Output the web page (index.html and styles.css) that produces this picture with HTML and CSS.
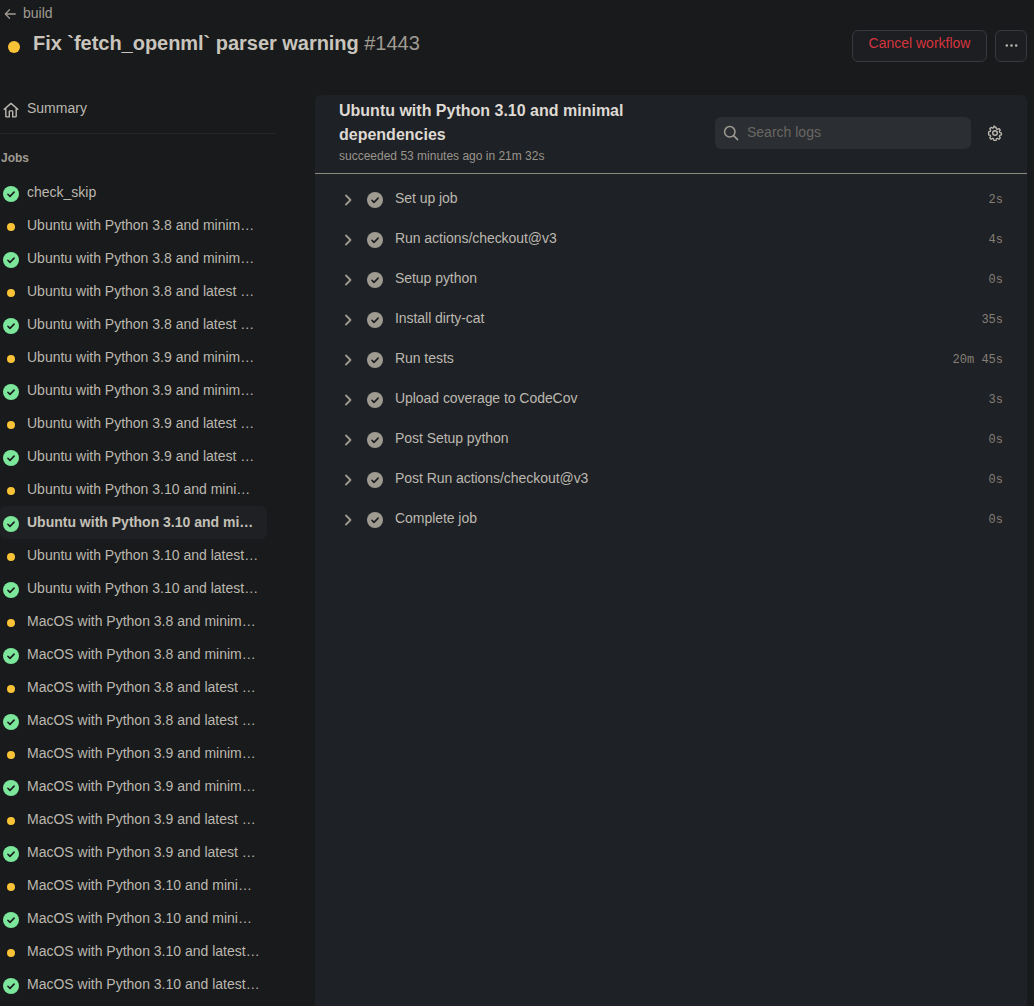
FILE: index.html
```html
<!DOCTYPE html>
<html lang="en">
<head>
<meta charset="utf-8">
<title>Fix `fetch_openml` parser warning #1443</title>
<link rel="stylesheet" href="styles.css">
<svg class="defs" width="0" height="0" aria-hidden="true">
  <symbol id="ok" viewBox="0 0 16 16"><circle cx="8" cy="8" r="8" fill="currentColor"/><path d="M4.900 8.300l2.100 2.100 4.100-4.300" fill="none" stroke="#1a1c1e" stroke-width="1.600" stroke-linecap="round" stroke-linejoin="round"/></symbol>
  <symbol id="dot" viewBox="0 0 16 16"><circle cx="8" cy="8" r="4" fill="#fac337"/></symbol>
  <symbol id="chev" viewBox="0 0 16 16"><path d="M6 3.500L10.500 8 6 12.500" fill="none" stroke="currentColor" stroke-width="1.800" stroke-linecap="round" stroke-linejoin="round"/></symbol>
</svg>
</head>
<body>
<header class="top">
  <div class="crumb">
    <svg class="i16" viewBox="0 0 16 16"><path d="M7.500 3L2.700 8l4.800 5M3 8h11" fill="none" stroke="currentColor" stroke-width="1.500" stroke-linecap="round" stroke-linejoin="round"/></svg>
    <span>build</span>
  </div>
  <div class="title-row">
    <svg class="title-dot" viewBox="0 0 12 12"><circle cx="6" cy="6" r="6" fill="#fac337"/></svg>
    <h1><b>Fix `fetch_openml` parser warning</b> <span class="num">#1443</span></h1>
    <button class="cancel">Cancel workflow</button>
    <button class="more"><svg class="i16" viewBox="0 0 16 16"><circle cx="3" cy="8" r="1.300"/><circle cx="8" cy="8" r="1.300"/><circle cx="13" cy="8" r="1.300"/></svg></button>
  </div>
</header>
<div class="main">
  <aside class="side">
    <div class="summary">
      <svg class="i16" viewBox="0 0 16 16"><path d="M1.200 7.200L8 1.400l6.800 5.800M2.800 6v8.200c0 .4.300.7.700.7h2.800V9.600c0-.4.300-.7.700-.7h2c.4 0 .7.300.7.700v5.300h2.800c.4 0 .7-.3.700-.7V6" fill="none" stroke="currentColor" stroke-width="1.400" stroke-linecap="round" stroke-linejoin="round"/></svg>
      <span>Summary</span>
    </div>
    <h2 class="jobs-h">Jobs</h2>
    <ul class="jobs">
      <li class="job"><svg class="st ok"><use href="#ok"/></svg><span>check_skip</span></li>
      <li class="job"><svg class="st"><use href="#dot"/></svg><span>Ubuntu with Python 3.8 and minimal dependencies</span></li>
      <li class="job"><svg class="st ok"><use href="#ok"/></svg><span>Ubuntu with Python 3.8 and minimal dependencies</span></li>
      <li class="job"><svg class="st"><use href="#dot"/></svg><span>Ubuntu with Python 3.8 and latest dependencies</span></li>
      <li class="job"><svg class="st ok"><use href="#ok"/></svg><span>Ubuntu with Python 3.8 and latest dependencies</span></li>
      <li class="job"><svg class="st"><use href="#dot"/></svg><span>Ubuntu with Python 3.9 and minimal dependencies</span></li>
      <li class="job"><svg class="st ok"><use href="#ok"/></svg><span>Ubuntu with Python 3.9 and minimal dependencies</span></li>
      <li class="job"><svg class="st"><use href="#dot"/></svg><span>Ubuntu with Python 3.9 and latest dependencies</span></li>
      <li class="job"><svg class="st ok"><use href="#ok"/></svg><span>Ubuntu with Python 3.9 and latest dependencies</span></li>
      <li class="job"><svg class="st"><use href="#dot"/></svg><span>Ubuntu with Python 3.10 and minimal dependencies</span></li>
      <li class="job active"><svg class="st ok"><use href="#ok"/></svg><span>Ubuntu with Python 3.10 and minimal dependencies</span></li>
      <li class="job"><svg class="st"><use href="#dot"/></svg><span>Ubuntu with Python 3.10 and latest dependencies</span></li>
      <li class="job"><svg class="st ok"><use href="#ok"/></svg><span>Ubuntu with Python 3.10 and latest dependencies</span></li>
      <li class="job"><svg class="st"><use href="#dot"/></svg><span>MacOS with Python 3.8 and minimal dependencies</span></li>
      <li class="job"><svg class="st ok"><use href="#ok"/></svg><span>MacOS with Python 3.8 and minimal dependencies</span></li>
      <li class="job"><svg class="st"><use href="#dot"/></svg><span>MacOS with Python 3.8 and latest dependencies</span></li>
      <li class="job"><svg class="st ok"><use href="#ok"/></svg><span>MacOS with Python 3.8 and latest dependencies</span></li>
      <li class="job"><svg class="st"><use href="#dot"/></svg><span>MacOS with Python 3.9 and minimal dependencies</span></li>
      <li class="job"><svg class="st ok"><use href="#ok"/></svg><span>MacOS with Python 3.9 and minimal dependencies</span></li>
      <li class="job"><svg class="st"><use href="#dot"/></svg><span>MacOS with Python 3.9 and latest dependencies</span></li>
      <li class="job"><svg class="st ok"><use href="#ok"/></svg><span>MacOS with Python 3.9 and latest dependencies</span></li>
      <li class="job"><svg class="st"><use href="#dot"/></svg><span>MacOS with Python 3.10 and minimal dependencies</span></li>
      <li class="job"><svg class="st ok"><use href="#ok"/></svg><span>MacOS with Python 3.10 and minimal dependencies</span></li>
      <li class="job"><svg class="st"><use href="#dot"/></svg><span>MacOS with Python 3.10 and latest dependencies</span></li>
      <li class="job"><svg class="st ok"><use href="#ok"/></svg><span>MacOS with Python 3.10 and latest dependencies</span></li>
    </ul>
  </aside>
  <section class="panel">
    <div class="panel-head">
      <div class="panel-title">
        <h2>Ubuntu with Python 3.10 and minimal dependencies</h2>
        <p>succeeded 53 minutes ago in 21m 32s</p>
      </div>
      <div class="search">
        <svg class="i16" viewBox="0 0 16 16"><circle cx="6.800" cy="6.800" r="5.200" fill="none" stroke="currentColor" stroke-width="1.500"/><path d="M10.600 10.600L14.600 14.600" stroke="currentColor" stroke-width="1.500" stroke-linecap="round"/></svg>
        <span>Search logs</span>
      </div>
      <svg class="i16 gear" viewBox="0 0 16 16"><path d="M8 .9l1.100.2.600 2 1.100.5 1.900-.9 1.500 1.600-1 1.800.4 1.200 2 .7v2.200l-2 .6-.4 1.200 1 1.800-1.500 1.600-1.900-.9-1.100.5-.6 2H6.900l-.6-2-1.100-.5-1.900.9-1.500-1.600 1-1.800-.4-1.200-2-.6V6.600l2-.7.4-1.200-1-1.800 1.500-1.600 1.900.9 1.100-.5.6-2z" transform="translate(1.300 1.300) scale(.84)" fill="none" stroke="currentColor" stroke-width="1.600" stroke-linejoin="round"/><circle cx="8" cy="8" r="2.300" fill="none" stroke="currentColor" stroke-width="1.400"/></svg>
    </div>
    <ul class="steps">
      <li class="step"><svg class="chev"><use href="#chev"/></svg><svg class="st grey"><use href="#ok"/></svg><span class="name">Set up job</span><time>2s</time></li>
      <li class="step"><svg class="chev"><use href="#chev"/></svg><svg class="st grey"><use href="#ok"/></svg><span class="name">Run actions/checkout@v3</span><time>4s</time></li>
      <li class="step"><svg class="chev"><use href="#chev"/></svg><svg class="st grey"><use href="#ok"/></svg><span class="name">Setup python</span><time>0s</time></li>
      <li class="step"><svg class="chev"><use href="#chev"/></svg><svg class="st grey"><use href="#ok"/></svg><span class="name">Install dirty-cat</span><time>35s</time></li>
      <li class="step"><svg class="chev"><use href="#chev"/></svg><svg class="st grey"><use href="#ok"/></svg><span class="name">Run tests</span><time>20m 45s</time></li>
      <li class="step"><svg class="chev"><use href="#chev"/></svg><svg class="st grey"><use href="#ok"/></svg><span class="name">Upload coverage to CodeCov</span><time>3s</time></li>
      <li class="step"><svg class="chev"><use href="#chev"/></svg><svg class="st grey"><use href="#ok"/></svg><span class="name">Post Setup python</span><time>0s</time></li>
      <li class="step"><svg class="chev"><use href="#chev"/></svg><svg class="st grey"><use href="#ok"/></svg><span class="name">Post Run actions/checkout@v3</span><time>0s</time></li>
      <li class="step"><svg class="chev"><use href="#chev"/></svg><svg class="st grey"><use href="#ok"/></svg><span class="name">Complete job</span><time>0s</time></li>
    </ul>
  </section>
</div>
</body>
</html>
```

FILE: styles.css
```css
* { box-sizing: border-box; }
html, body { height: 100%; }
body {
  margin: 0;
  overflow: hidden;
  background: #181a1c;
  color: #bcb8af;
  font: 14px/20px "Liberation Sans", Arial, sans-serif;
}
ul { list-style: none; margin: 0; padding: 0; }
h1, h2, p { margin: 0; }
.defs { display: block; height: 0; }
.i16 { width: 16px; height: 16px; flex: none; fill: currentColor; }

.top { height: 95px; padding: 3px 7px 0 0; }
.crumb { display: flex; align-items: center; gap: 6px; padding-left: 3px; height: 20px; color: #a09b91; }
.crumb .i16 { margin-top: 2px; width: 14px; height: 14px; }
.title-row { display: flex; align-items: center; height: 32px; margin-top: 7px; padding-left: 8px; }
.title-dot { width: 12px; height: 12px; flex: none; margin-top: 1px; }
.title-row h1 { flex: 1; margin-left: 13px; padding-bottom: 7px; font-size: 20px; line-height: 30px; font-weight: 400; color: #c9c5bd; white-space: nowrap; letter-spacing: -.03px; }
.num { color: #a09b91; }
.cancel, .more {
  height: 32px;
  background: #1c1e21;
  border: 1px solid #363a3e;
  border-radius: 6px;
  font: inherit;
  padding: 0;
}
.cancel { width: 135px; color: #d5353e; padding-bottom: 6px; }
.more { width: 32px; margin-left: 8px; color: #bcb8af; display: flex; align-items: center; justify-content: center; padding-bottom: 2px; }
.more .i16 { width: 15px; height: 15px; }

.main { display: flex; height: 911px; }
.side { width: 315px; flex: none; }
.summary {
  display: flex;
  align-items: center;
  gap: 8px;
  width: 276px;
  height: 39px;
  padding: 0 0 12px 3px;
  border-bottom: 1px solid #24272a;
}
.summary .i16 { margin-top: 3px; }
.jobs-h { margin: 14px 0 0 1px; font-size: 12px; line-height: 20px; font-weight: 700; color: #a09b91; }
.jobs { margin-top: 8px; }
.job {
  display: flex;
  align-items: center;
  height: 33px;
  width: 267px;
  padding-left: 3px;
  border-radius: 6px;
  gap: 8px;
}
.job span { width: 234px; padding-bottom: 2px; white-space: nowrap; overflow: hidden; text-overflow: ellipsis; }
.job.active { background: #1e2023; font-weight: 700; color: #c4c0b8; }
.job.active span { width: 228px; }
.st { width: 16px; height: 16px; flex: none; margin-top: 2px; }
.st.ok { color: #7ce69b; }
.st.grey { color: #a09b91; }

.panel {
  width: 712px;
  flex: none;
  background: #1e2126;
  border-radius: 6px 6px 0 0;
}
.panel-head {
  display: flex;
  align-items: center;
  height: 79px;
  padding: 0 24px;
  border-bottom: 1px solid #8e8a80;
}
.panel-title { width: 376px; flex: none; margin-bottom: 2px; }
.panel-title h2 { font-size: 16px; line-height: 24px; font-weight: 700; color: #dedad3; }
.panel-title p { margin: 0 0 2px; font-size: 12px; line-height: 18px; color: #9a958b; }
.search {
  display: flex;
  align-items: center;
  gap: 8px;
  width: 256px;
  height: 32px;
  margin-bottom: 3px;
  padding-left: 8px;
  background: #2b2e32;
  border-radius: 6px;
  color: #6a6762;
}
.search span { padding-bottom: 2px; }
.search .i16 { color: #a09b91; }
.gear { margin-left: 16px; margin-bottom: 2px; color: #bcb8af; }

.steps { padding-top: 5px; }
.step { display: flex; align-items: center; height: 40px; padding: 0 24px 0 24px; }
.chev { width: 16px; height: 16px; color: #a09b91; flex: none; margin: 2px 0 0 1px; }
.step .st { margin-left: 11px; }
.name { margin-left: 12px; flex: 1; padding-bottom: 2px; letter-spacing: -.05px; }
time { font: 12px/20px "Liberation Mono", monospace; color: #857f75; padding-top: 1px; }
```
